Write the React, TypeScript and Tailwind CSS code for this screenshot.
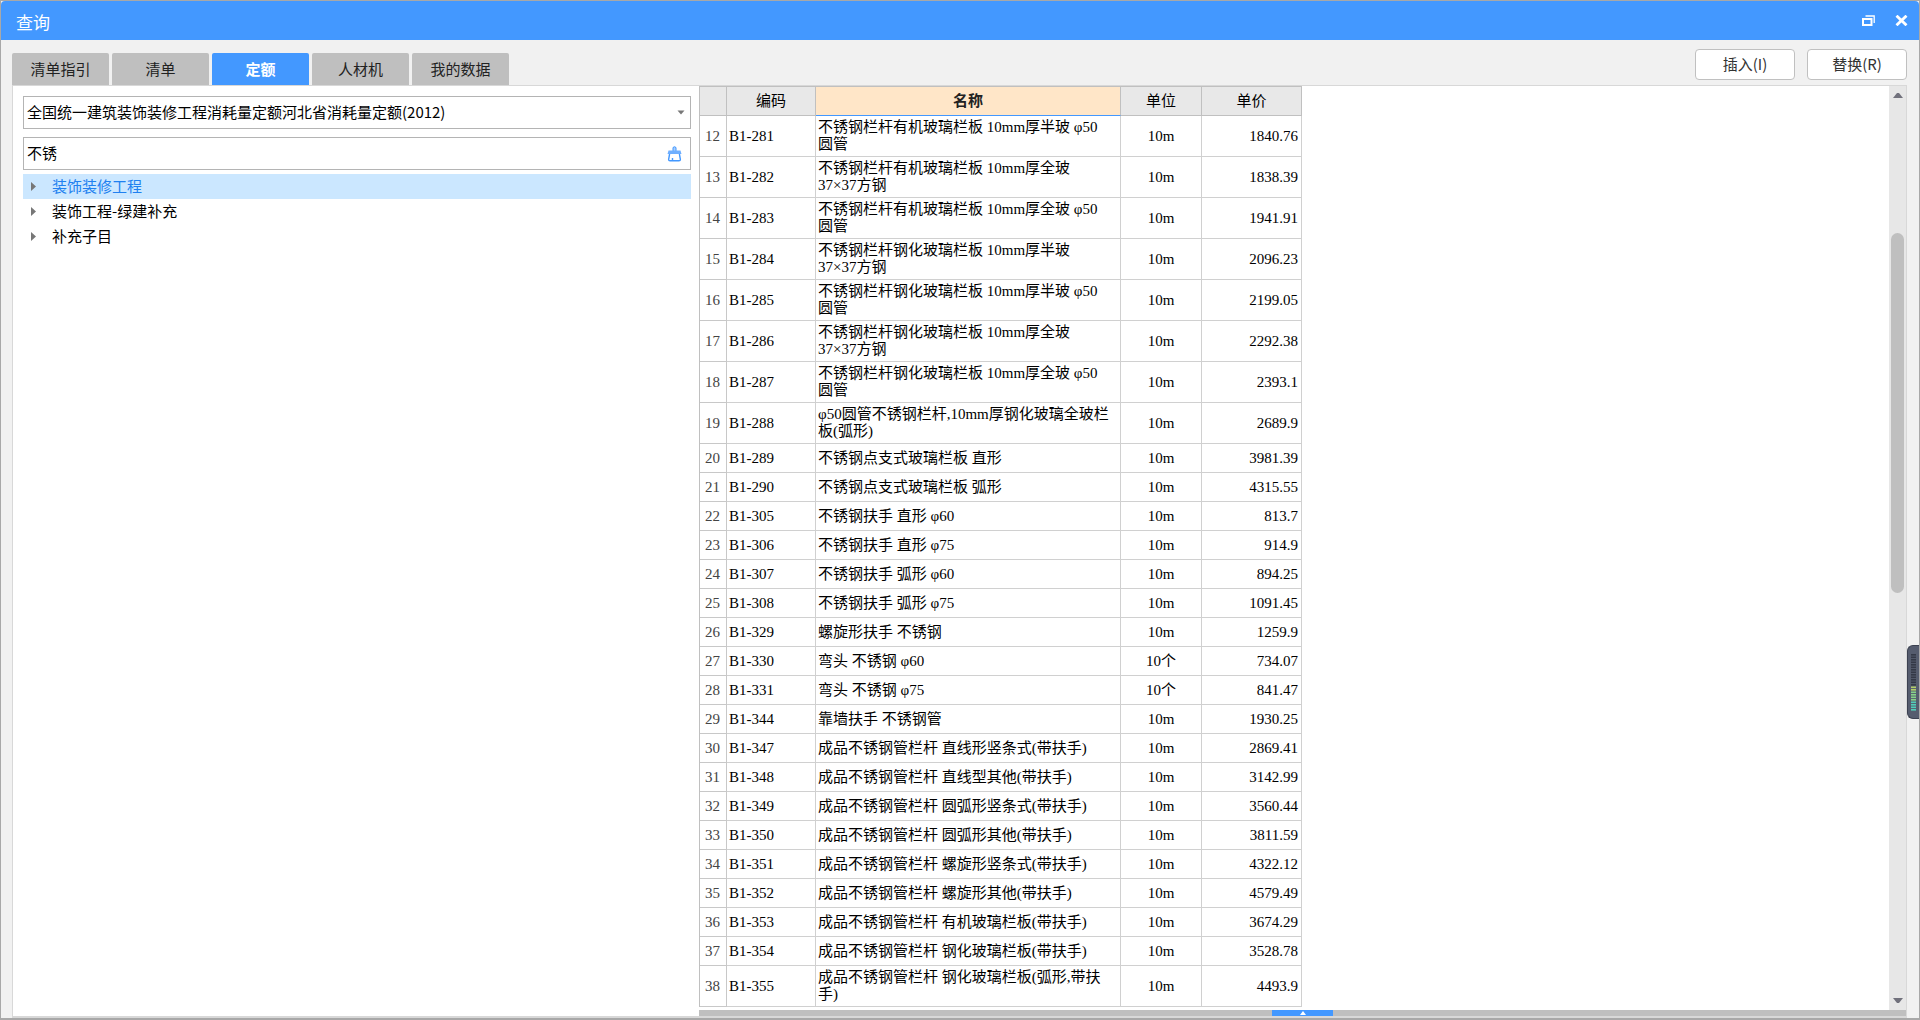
type Row = { no: number; code: string; name: string; unit: string; price: string };

const tabs = ["清单指引", "清单", "定额", "人材机", "我的数据"];

const tree = ["装饰装修工程", "装饰工程-绿建补充", "补充子目"];

const rows: Row[] = [
  { no: 12, code: "B1-281", name: "不锈钢栏杆有机玻璃栏板 10mm厚半玻 φ50\n圆管", unit: "10m", price: "1840.76" },
  { no: 13, code: "B1-282", name: "不锈钢栏杆有机玻璃栏板 10mm厚全玻\n37×37方钢", unit: "10m", price: "1838.39" },
  { no: 14, code: "B1-283", name: "不锈钢栏杆有机玻璃栏板 10mm厚全玻 φ50\n圆管", unit: "10m", price: "1941.91" },
  { no: 15, code: "B1-284", name: "不锈钢栏杆钢化玻璃栏板 10mm厚半玻\n37×37方钢", unit: "10m", price: "2096.23" },
  { no: 16, code: "B1-285", name: "不锈钢栏杆钢化玻璃栏板 10mm厚半玻 φ50\n圆管", unit: "10m", price: "2199.05" },
  { no: 17, code: "B1-286", name: "不锈钢栏杆钢化玻璃栏板 10mm厚全玻\n37×37方钢", unit: "10m", price: "2292.38" },
  { no: 18, code: "B1-287", name: "不锈钢栏杆钢化玻璃栏板 10mm厚全玻 φ50\n圆管", unit: "10m", price: "2393.1" },
  { no: 19, code: "B1-288", name: "φ50圆管不锈钢栏杆,10mm厚钢化玻璃全玻栏\n板(弧形)", unit: "10m", price: "2689.9" },
  { no: 20, code: "B1-289", name: "不锈钢点支式玻璃栏板 直形", unit: "10m", price: "3981.39" },
  { no: 21, code: "B1-290", name: "不锈钢点支式玻璃栏板 弧形", unit: "10m", price: "4315.55" },
  { no: 22, code: "B1-305", name: "不锈钢扶手 直形 φ60", unit: "10m", price: "813.7" },
  { no: 23, code: "B1-306", name: "不锈钢扶手 直形 φ75", unit: "10m", price: "914.9" },
  { no: 24, code: "B1-307", name: "不锈钢扶手 弧形 φ60", unit: "10m", price: "894.25" },
  { no: 25, code: "B1-308", name: "不锈钢扶手 弧形 φ75", unit: "10m", price: "1091.45" },
  { no: 26, code: "B1-329", name: "螺旋形扶手 不锈钢", unit: "10m", price: "1259.9" },
  { no: 27, code: "B1-330", name: "弯头 不锈钢 φ60", unit: "10个", price: "734.07" },
  { no: 28, code: "B1-331", name: "弯头 不锈钢 φ75", unit: "10个", price: "841.47" },
  { no: 29, code: "B1-344", name: "靠墙扶手 不锈钢管", unit: "10m", price: "1930.25" },
  { no: 30, code: "B1-347", name: "成品不锈钢管栏杆 直线形竖条式(带扶手)", unit: "10m", price: "2869.41" },
  { no: 31, code: "B1-348", name: "成品不锈钢管栏杆 直线型其他(带扶手)", unit: "10m", price: "3142.99" },
  { no: 32, code: "B1-349", name: "成品不锈钢管栏杆 圆弧形竖条式(带扶手)", unit: "10m", price: "3560.44" },
  { no: 33, code: "B1-350", name: "成品不锈钢管栏杆 圆弧形其他(带扶手)", unit: "10m", price: "3811.59" },
  { no: 34, code: "B1-351", name: "成品不锈钢管栏杆 螺旋形竖条式(带扶手)", unit: "10m", price: "4322.12" },
  { no: 35, code: "B1-352", name: "成品不锈钢管栏杆 螺旋形其他(带扶手)", unit: "10m", price: "4579.49" },
  { no: 36, code: "B1-353", name: "成品不锈钢管栏杆 有机玻璃栏板(带扶手)", unit: "10m", price: "3674.29" },
  { no: 37, code: "B1-354", name: "成品不锈钢管栏杆 钢化玻璃栏板(带扶手)", unit: "10m", price: "3528.78" },
  { no: 38, code: "B1-355", name: "成品不锈钢管栏杆 钢化玻璃栏板(弧形,带扶\n手)", unit: "10m", price: "4493.9" },
];

const meter = Array.from({ length: 23 }, (_, i) => i);

function TitleBar() {
  return (
    <header className="flex h-[39px] shrink-0 items-center justify-between rounded-t-sm bg-[#4398ff] pr-[11px] pl-[15px] text-white">
      <h1 className="pt-[2px] text-[17px] leading-6">查询</h1>
      <div className="flex items-center gap-5">
        <button aria-label="还原">
          <svg className="block" width="13" height="11" viewBox="0 0 13 11" fill="none" stroke="currentColor">
            <path d="M3.5 1H12.2V8" strokeWidth="1.3" />
            <rect x="1" y="4" width="8.5" height="6" strokeWidth="2" />
          </svg>
        </button>
        <button aria-label="关闭">
          <svg className="block" width="13" height="11" viewBox="0 0 13 11" stroke="currentColor" strokeWidth="2.8">
            <path d="M1.5 0.7L11.5 10.3M11.5 0.7L1.5 10.3" />
          </svg>
        </button>
      </div>
    </header>
  );
}

function Toolbar() {
  return (
    <div className="flex h-[45px] shrink-0 items-end justify-between">
      <nav className="flex gap-[3px]">
        {tabs.map((tab) => (
          <button
            key={tab}
            className={
              tab === "定额"
                ? "h-8 w-[97px] rounded-t-xs bg-[#4398ff] font-bold text-white"
                : "h-8 w-[97px] rounded-t-xs bg-[#bfbfbf] text-[#222]"
            }
          >
            {tab}
          </button>
        ))}
      </nav>
      <div className="mb-[5px] flex gap-3">
        <button className="h-[31px] w-[100px] rounded-sm border border-[#c0c0c0] bg-white text-[#333]">插入(I)</button>
        <button className="h-[31px] w-[100px] rounded-sm border border-[#c0c0c0] bg-white text-[#333]">替换(R)</button>
      </div>
    </div>
  );
}

function Sidebar() {
  return (
    <aside className="w-[686px] shrink-0 pt-[10px] pr-2 pl-[10px]">
      <div className="relative">
        <select
          aria-label="定额库"
          className="block h-[33px] w-full appearance-none border border-[#b4b4b4] bg-white px-[3px] text-black"
        >
          <option>全国统一建筑装饰装修工程消耗量定额河北省消耗量定额(2012)</option>
        </select>
        <svg className="pointer-events-none absolute top-[14px] right-[6px]" width="8" height="5" viewBox="0 0 8 5">
          <path d="M0.5 0.5H7.5L4 4.5Z" fill="#777" />
        </svg>
      </div>
      <div className="mt-2 flex h-[33px] items-center border border-[#b4b4b4] pr-2 pl-[3px]">
        <input aria-label="搜索" defaultValue="不锈" className="min-w-0 flex-1 text-black outline-none" />
        <button aria-label="清空">
          <svg className="block" width="15" height="16" viewBox="0 0 15 16" fill="none" stroke="#4398ff">
            <path d="M6 5V1.5Q7.5 0 9 1.5V5" fill="#a9cfff" strokeWidth="1" />
            <path d="M1.5 4.5H13.5L14.5 8H0.5Z" fill="#6fafff" stroke="none" />
            <path d="M2.6 8L1.6 13.5Q1.6 14.8 3 14.8H12Q13.4 14.8 13.4 13.5L12.4 8M5.5 14.5V12" strokeWidth="1.4" />
          </svg>
        </button>
      </div>
      <ul className="mt-1">
        {tree.map((item, i) => (
          <li
            key={item}
            className={
              i === 0
                ? "flex h-[25px] items-center gap-4 bg-[#cbe7ff] pl-2 text-[#2080f0]"
                : "flex h-[25px] items-center gap-4 pl-2 text-black"
            }
          >
            <svg width="5" height="9" viewBox="0 0 5 9">
              <path d="M0 0L5 4.5L0 9Z" fill="#777" />
            </svg>
            {item}
          </li>
        ))}
      </ul>
    </aside>
  );
}

function PriceTable() {
  return (
    <table className="w-[603px] table-fixed border-separate border-spacing-0 border-l border-[#c0c0c0] font-['Liberation_Serif','Noto_Sans_CJK_SC',serif] leading-[17px] text-black">
      <colgroup>
        <col className="w-[27px]" />
        <col className="w-[89px]" />
        <col className="w-[305px]" />
        <col className="w-[81px]" />
        <col className="w-[100px]" />
      </colgroup>
      <thead>
        <tr className="h-[30px] bg-[#e8e8e8]">
          <th aria-label="序号" className="border-t border-r border-b border-[#c0c0c0] p-0" />
          <th className="border-t border-r border-b border-[#c0c0c0] p-0 font-normal">编码</th>
          <th className="border-t border-r border-b border-t-[#c0c0c0] border-r-[#c0c0c0] border-b-[#4398ff] bg-[#ffe6c8] p-0 font-bold text-[#222]">
            名称
          </th>
          <th className="border-t border-r border-b border-[#c0c0c0] p-0 font-normal">单位</th>
          <th className="border-t border-r border-b border-[#c0c0c0] p-0 font-normal">单价</th>
        </tr>
      </thead>
      <tbody>
        {rows.map((row) => (
          <tr key={row.no} className={row.name.includes("\n") ? "h-[41px]" : "h-[29px]"}>
            <td className="border-r border-b border-[#c8c8c8] p-0 pl-[5px] text-[#444]">{row.no}</td>
            <td className="border-r border-b border-[#d0d0d0] p-0 pl-[2px]">{row.code}</td>
            <td className="border-r border-b border-[#d0d0d0] p-0 pl-[2px] whitespace-pre">{row.name}</td>
            <td className="border-r border-b border-[#d0d0d0] p-0 text-center">{row.unit}</td>
            <td className="border-r border-b border-[#d0d0d0] p-0 pr-[3px] text-right">{row.price}</td>
          </tr>
        ))}
      </tbody>
    </table>
  );
}

function ScrollBar() {
  return (
    <div className="flex w-[17px] shrink-0 flex-col items-center bg-[#e7e7e7] py-[7px]">
      <svg width="10" height="5" viewBox="0 0 10 5">
        <path d="M0 5L4 0H6L10 5Z" fill="#71717c" />
      </svg>
      <div className="flex w-full flex-1 flex-col items-center">
        <div className="basis-[15%]" />
        <div className="w-[13px] basis-[40%] rounded-full bg-[#bfbfbf]" />
      </div>
      <svg width="10" height="5" viewBox="0 0 10 5">
        <path d="M0 0H10L6 5H4Z" fill="#71717c" />
      </svg>
    </div>
  );
}

function Meter() {
  return (
    <div className="absolute top-[644px] right-0 flex h-[74px] w-3 justify-center rounded-l-md border border-r-0 border-[#3c4150] bg-[#555c6e] pt-2">
      <svg width="5" height="58" viewBox="0 0 5 58">
        {meter.map((i) => (
          <rect
            key={i}
            y={i * 2.5}
            width="5"
            height="1.6"
            fill={i < 13 ? "#343947" : i < 15 ? "#b3cf6a" : i < 19 ? "#86d18a" : "#52cdb8"}
          />
        ))}
      </svg>
    </div>
  );
}

export default function App() {
  return (
    <div className="relative flex h-screen flex-col border-t border-r border-b-2 border-l border-[#a8a8a8] bg-[#f1f1f1] font-['Noto_Sans_CJK_SC',sans-serif] text-[15px]">
      <TitleBar />
      <div className="flex min-h-0 flex-1 flex-col pr-3 pl-[11px]">
        <Toolbar />
        <main className="flex min-h-0 flex-1 border-t border-r border-b-2 border-l border-[#d8d8d8] bg-white">
          <Sidebar />
          <section className="flex min-w-0 flex-1 flex-col">
            <div className="flex min-h-0 flex-1">
              <div className="min-w-0 flex-1 overflow-hidden">
                <PriceTable />
              </div>
              <ScrollBar />
            </div>
            <div className="flex h-[6px] shrink-0 justify-center bg-[#bfbfbf]">
              <button aria-label="展开" className="flex w-[61px] items-center justify-center bg-[#4398ff]">
                <svg width="6" height="4" viewBox="0 0 6 4">
                  <path d="M3 0L6 4H0Z" fill="white" />
                </svg>
              </button>
            </div>
          </section>
        </main>
      </div>
      <Meter />
    </div>
  );
}
